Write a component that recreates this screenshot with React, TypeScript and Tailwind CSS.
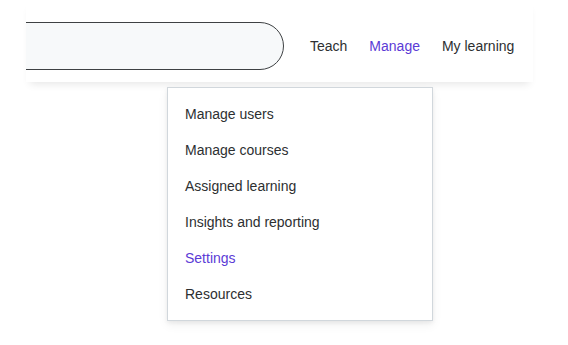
import React from "react";

const items = [
  "Manage users",
  "Manage courses",
  "Assigned learning",
  "Insights and reporting",
  "Settings",
  "Resources",
];

export default function App() {
  return (
    <div
      className="relative w-[568px] h-[345px] bg-white overflow-hidden text-[14px] text-[#2d2f31]"
      style={{ fontFamily: '"Liberation Sans", Arial, sans-serif' }}
    >
      <div className="ml-[26px] w-[507px] h-[82px] bg-white flex items-start pt-[22px] shadow-[0_6px_8px_-4px_rgba(0,0,0,0.1)]">
        <div className="w-[258px] h-12 overflow-hidden shrink-0">
          <div className="-ml-[40px] w-[298px] h-12 rounded-full border border-[#3e4143] bg-[#f7f9fa]" />
        </div>
        <nav className="ml-[26px] h-12 flex items-center gap-[22px]">
          <span>Teach</span>
          <span className="text-[#5b3bd6]">Manage</span>
          <span>My learning</span>
        </nav>
      </div>
      <div className="absolute left-[167px] top-[87px] w-[266px] bg-white border border-[#d1d7dc] py-2 shadow-[0_2px_4px_rgba(0,0,0,0.06),0_4px_10px_rgba(0,0,0,0.06)]">
        {items.map((t) => (
          <div
            key={t}
            className={`h-9 flex items-center pl-[17px] ${t === "Settings" ? "text-[#5b3bd6]" : ""}`}
          >
            {t}
          </div>
        ))}
      </div>
    </div>
  );
}
